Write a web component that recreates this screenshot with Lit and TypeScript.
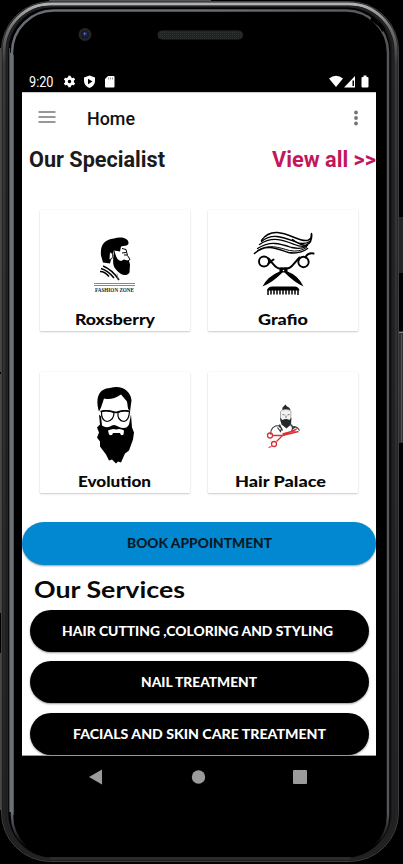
import { LitElement, html, svg, css } from "lit";
import { customElement } from "lit/decorators.js";

/* A line of display lettering fitted to an exact width. */
const label = (text: string, width: number, size: number, weight: number, color: string) => html`
  <svg class="label" width=${width} height=${size + 8} viewBox="0 0 ${width} ${size + 8}">
    <text x="0" y=${size} fill=${color} font-size=${size} font-weight=${weight}
      textLength=${width} lengthAdjust="spacingAndGlyphs">${text}</text>
  </svg>`;

const fashion = svg`
  <path d="M73 62L71 55C70 45 74 39 84 38C90 36 98 37 98.500 42C99 46 94 45 91 46L90 51L84 50L82 55L80 63Z"/>
  <path d="M79.500 52.500C82 51 83.500 54 82 58L79 59.500Z" fill="#fff" stroke="#000" stroke-width=".8"/>
  <path d="M92 48L96 49L97.500 55L100 59L97 61M92 52.500L96 52M94 54.500L97 54.500" fill="none" stroke="#000" stroke-width="1"/>
  <path d="M84 49C86 56 87 60 91 60.500L94 59L99 60.500L100 64L99.500 72C96 77 90 74 86 69C82 65 83 60 84 49Z"/>
  <path d="M73 65.500Q82 69 89 79.500M71 68Q78 70 84 77.500M70 71Q75 71 79 76" fill="none" stroke="#000" stroke-width="1.500"/>
  <path d="M87 73L88 79" stroke="#666" stroke-width=".7"/>
  <path d="M64 83H105M64 85H105" stroke="#555" stroke-width=".7"/>
  <text x="65" y="91.500" font-size="6" font-weight="700" font-family="Liberation Serif, serif" fill="#222" textLength="39" lengthAdjust="spacingAndGlyphs">FASHION ZONE</text>`;

const grafio = svg`
  <g fill="none" stroke="#000" stroke-width="1.300" stroke-linecap="round">
    <path d="M61 40C70 27 84 33 94 37C105 42 112 41 111 33" stroke-width="1.500"/>
    <path d="M111 34Q112 42 105 45Q98 44 92 39" stroke-width="1.600"/>
    <path d="M61 41C72 32 83 37 94 41Q103 45 109 41"/>
    <path d="M59 44C72 35 84 40 94 44Q101 47 107 45"/>
    <path d="M57 48C70 40 79 43 91 47Q100 49 106 46"/>
    <path d="M54 53C66 42 78 49 88 52Q99 54 107 48" stroke-width="1.500"/>
    <path d="M57 50C68 43 78 47 89 50Q99 52 106 47" stroke-width="1"/>
    <circle cx="63.500" cy="61" r="5" stroke-width="1.900"/>
    <circle cx="103" cy="61.500" r="5.200" stroke-width="1.900"/>
    <path d="M68 63L73 59M68 58C74 65 76 69 82 68M99 57C92 64 91 69 84 68M105 57Q107 52 113 53" stroke-width="2"/>
  </g>
  <path d="M79 67H87L87 71Q98 75 103 86Q94 82 84 72L82 72Q72 82 62 86Q67 76 79 71Z"/>
  <circle cx="83" cy="70" r=".8" fill="#fff"/>
  <path d="M66.500 90Q67.500 86 72 86H94Q98 86 99 90Z"/>
  <path d="M67.500 89V94.500M70.500 89V94M73.500 89V94M76.500 89V94M79.500 89V94M82.500 89V94M85.500 89V94M88.500 89V94M91.500 89V94M94.500 89V94M97.500 89V94.500" stroke="#000" stroke-width="1.500"/>`;

const evolution = svg`
  <path d="M69 47C65 33 69 24 80 23.500C92 20 101 27 101.500 36L100 47L98 44L97 37L91 30Q82 36 74 34L71 43Z"/>
  <path d="M69 50L71 52L72 61Q76 64 80 62Q84 59 88 62Q96 66 99 60L101 50L102 63L104 68L103 75L99 86L95 89L91 98L88 97L86 99L82 95L79 96L76 90L70 82L70 77L67 73L69 68L67 63L70 60Z"/>
  <path d="M78 66Q83 63.500 86 65Q91 63.500 94 66L93.500 70Q91 72 90 68.500H83Q82 72 79 70Z" fill="#fff"/>
  <g fill="#fff" stroke="#000" stroke-width="1.200"><path d="M71.500 47Q77 45 84 48Q84 56 77 57Q71 56 71.500 47Z"/><path d="M88 48Q94 45 99.500 47Q99 56 94 57Q87 56 88 48Z"/></g>
  <path d="M70.500 47Q77 45 86 48Q93 45 100 47" fill="none" stroke="#000" stroke-width="1.600"/>`;

const palace = svg`
  <path d="M81.500 47L82 43L84 41L85 40L86.500 42Q90 43 90 47L85.500 45.500Z" fill="#222a2c"/>
  <path d="M80 47Q81 45 85.500 45Q90 45 90.500 47L90 57Q85 61 80 57Z" fill="#f2f2f2" stroke="#999" stroke-width=".8"/>
  <path d="M82 50L84 50.500M87 50.500L89 50M85.500 51V53.500" fill="none" stroke="#555" stroke-width=".8"/>
  <path d="M79.500 53L82 55.500Q85.500 53.500 89 55.500L91 53L90.500 60L86 64L81 60Z" fill="#25282a"/>
  <path d="M79 61Q70 61 70 70M79 60L82 66M91 60Q93 64 91 67M78 61L81 64L80 67L77 63M90 61L94 63L91 65M93 62Q97 62 99 66" fill="none" stroke="#333a40" stroke-width="1.200"/>
  <g fill="none" stroke="#dc3034" stroke-width="1.300">
    <circle cx="69.500" cy="71" r="2.500"/><circle cx="73.500" cy="79.500" r="2.500"/>
    <path d="M72 71L82 71L97 64M76 77L82 71L98 67M82 69.500L95 66M71 82L68 83"/>
  </g>`;

const specialists = [
  { name: "Roxsberry", width: 80, art: fashion, view: "10 9.5 150 101" },
  { name: "Grafio", width: 50, art: grafio, view: "7.5 9.5 150 101" },
  { name: "Evolution", width: 73, art: evolution, view: "10 7.5 150 101" },
  { name: "Hair Palace", width: 91, art: palace, view: "5.5 7.5 150 101", shift: true },
];
const services = [
  { name: "HAIR CUTTING ,COLORING AND STYLING", width: 271, shift: true },
  { name: "NAIL TREATMENT", width: 116 },
  { name: "FACIALS AND SKIN CARE TREATMENT", width: 253 },
];

@customElement("phone-frame")
class PhoneFrame extends LitElement {
  static styles = css`:host, svg { display: block; }`;
  render() {
    return html`<svg width="403" height="864" viewBox="0 0 403 864">
      <defs>
        <linearGradient id="rim" x2="1"><stop stop-color="#686d75"/><stop offset=".5" stop-color="#6c6c72"/><stop offset="1" stop-color="#55555b"/></linearGradient>
        <linearGradient id="down" x2="0" y2="1"><stop stop-color="#b0b3b5"/><stop offset=".025" stop-color="#777"/><stop offset=".07" stop-color="#383838"/><stop offset="1" stop-color="#222"/></linearGradient>
        <linearGradient id="fade" x2="0" y2="1"><stop stop-color="#fff"/><stop offset=".94" stop-color="#fff"/><stop offset=".98" stop-color="#000"/></linearGradient>
        <mask id="inner"><rect width="403" height="864" fill="url(#fade)"/></mask>
        <pattern id="mesh" width="2" height="2" patternUnits="userSpaceOnUse"><rect width="2" height="2" fill="#202323"/><rect width="1" height="1" fill="#303333"/></pattern>
      </defs>
      <rect width="403" height="864"/>
      <path d="M.5 48V372M.5 374V613M.5 653V810" stroke="#484848"/>
      <path d="M49 .5H211" stroke="#555"/>
      <rect x="399" y="217" width="4" height="56" fill="#242424"/><rect x="399" y="331" width="4" height="112" fill="#303030"/>
      <path d="M401.500 334V442" stroke="#555"/><path d="M399 332.500H403" stroke="#888"/>
      <rect x="1.500" y="1.500" width="397" height="860" rx="49" fill="#181818" stroke="#404040"/>
      <rect x="4" y="4" width="392" height="855" rx="47" fill="none" stroke="url(#down)" stroke-width="3"/>
      <rect x="7" y="6.500" width="386" height="850" rx="44" fill="none" stroke="#242424" stroke-width="1.500"/>
      <rect x="8.500" y="7.500" width="382" height="850" rx="44" fill="#000"/>
      <g mask="url(#inner)"><rect x="12" y="10.500" width="376" height="847" rx="42" fill="#000" stroke="url(#rim)" stroke-width="2.500"/>
        <path d="M9.500 48V812" stroke="#45494f"/><path d="M11.500 53V812" stroke="#697078" stroke-width="3"/><path d="M13.500 55V815" stroke="#50545b"/></g>
      <path d="M371 18.500Q381 24 384 31" fill="none" stroke="#000" stroke-width="4"/>
      <path d="M50 858.500H350" stroke="#2b2b2b" stroke-width="3"/>
      <circle cx="85" cy="34.500" r="6.500" fill="#252526"/><circle cx="85" cy="34.500" r="4" fill="#151a30"/><circle cx="85" cy="34" r="2" fill="#29376f"/><circle cx="84.500" cy="33.500" r=".7" fill="#8795bd"/>
      <rect x="158" y="31" width="84.500" height="8" rx="4" fill="url(#mesh)" stroke="#292b2b"/>
    </svg>`;
  }
}

@customElement("app-root")
class AppRoot extends LitElement {
  static styles = css`
    :host { display: block; position: relative; width: 403px; height: 864px; overflow: hidden; background: #000; font-family: Roboto, sans-serif; }
    * { box-sizing: border-box; }
    svg { display: block; flex: none; }
    phone-frame { position: absolute; inset: 0; }
    .device { position: relative; width: 354px; margin-left: 22px; padding-top: 71px; }
    .status { height: 21px; }
    .screen { background: #fff; height: 664px; overflow: hidden; border-top: 1px solid #ccc; border-bottom: 1px solid #999; }
    .bar { height: 51px; display: flex; align-items: center; padding: 0 17.5px 0 16px; }
    .menu { margin-top: -3px; }
    .more { margin-top: -2px; }
    .title { margin: 2px auto 0 31px; }
    .heading { height: 31px; display: flex; justify-content: space-between; align-items: center; padding-left: 7px; }
    .label { font-family: Lato, sans-serif; overflow: visible; }
    .bar .label, .heading .label { font-family: Roboto, sans-serif; }
    .cards { display: grid; grid-template-columns: 150px 150px; column-gap: 18px; row-gap: 41px; margin: 35px 0 0 17.5px; }
    .card { height: 121px; background: #fff; box-shadow: 0 1px 2px #0003, 0 0 1px #0002; display: flex; flex-direction: column; align-items: center; border-radius: 1px; }
    .art { width: 150px; height: 101px; }
    .card .label { margin-top: -1px; }
    .button { display: flex; align-items: center; justify-content: center; width: 339px; height: 42px; padding-top: 5px; border-radius: 22px; background: #000; box-shadow: 0 1px 2px #0006; }
    .book { background: #0288d1; width: 354px; height: 43px; margin-top: 28.5px; padding-top: 4px; }
    .services { padding: 10px 0 0 12px; height: 45px; }
    .list { display: flex; flex-direction: column; margin-left: 7.5px; gap: 9.5px; }
    .shift { padding-right: 4px; }
  `;
  render() {
    return html`
      <phone-frame></phone-frame>
      <div class="device">
        <svg class="status" width="354" height="21" viewBox="0 0 354 21" fill="#fff">
          <text x="7" y="16" font-size="14" textLength="24.500" lengthAdjust="spacingAndGlyphs">9:20</text>
          <circle cx="47.500" cy="10.500" r="3.100" fill="none" stroke="#fff" stroke-width="2.700"/>
          <path d="M47.500 4.700V7M47.500 14V16.300M42.500 7.600L44.500 8.800M50.500 12.200L52.500 13.400M42.500 13.400L44.500 12.200M50.500 8.800L52.500 7.600" stroke="#fff" stroke-width="2.600"/>
          <path d="M67.500 4.500L73 6.500V10Q73 14.500 67.500 17Q62 14.500 62 10V6.500Z"/><path d="M66 7.700L70.500 10.500L66 13.300Z" fill="#000"/>
          <path d="M86 5H91.500Q92.500 5 92.500 6V15.500Q92.500 16.500 91.500 16.500H84Q83 16.500 83 15.500V8Z"/><path d="M86.500 6.500V8.500M88.500 6.500V8.500M90.500 6.500V8.500" stroke="#777" stroke-width=".8"/>
          <path d="M307 7.500Q314 2 321 7.500L314 16Z"/>
          <path d="M322 16.500L333 5V16.500Z"/><path d="M330.500 9.500V15H332V9.500Z" fill="#000"/>
          <path d="M341.500 4.500H344.500V6H345.500Q346.500 6 346.500 7V15.500Q346.500 16.500 345.500 16.500H340.500Q339.500 16.500 339.500 15.500V7Q339.500 6 340.500 6H341.500Z"/>
        </svg>
        <main class="screen">
          <header class="bar">
            <svg class="menu" width="18" height="14" viewBox="0 0 18 14"><path d="M.5 2H17.500M.5 7H17.500M.5 12H17.500" stroke="#777" stroke-width="1.500"/></svg>
            <span class="title">${label("Home", 48, 18, 500, "#111")}</span>
            <svg class="more" width="6" height="16" viewBox="0 0 6 16" fill="#757575"><circle cx="3" cy="2.500" r="1.900"/><circle cx="3" cy="8" r="1.900"/><circle cx="3" cy="13.500" r="1.900"/></svg>
          </header>
          <section class="heading">${label("Our Specialist", 136, 22, 700, "#1b1b1b")}${label("View all >>", 104, 22, 700, "#c2185b")}</section>
          <section class="cards">${specialists.map(s => html`
            <article class="card ${s.shift ? "shift" : ""}"><svg class="art" width="150" height="101" viewBox=${s.view}>${s.art}</svg>${label(s.name, s.width, 15, 900, "#080808")}</article>`)}
          </section>
          <div class="button book">${label("BOOK APPOINTMENT", 145, 13, 900, "#071a26")}</div>
          <div class="services">${label("Our Services", 151, 23, 700, "#080808")}</div>
          <section class="list">${services.map(s => html`<div class="button ${s.shift ? "shift" : ""}">${label(s.name, s.width, 13, 900, "#fff")}</div>`)}</section>
        </main>
        <svg width="354" height="43" viewBox="0 0 354 43" fill="#9b9b9b">
          <path d="M67 21L80 13.500V28.500Z"/><circle cx="176.500" cy="21" r="6.700"/><rect x="271" y="14" width="14" height="14" rx="1"/>
        </svg>
      </div>`;
  }
}
